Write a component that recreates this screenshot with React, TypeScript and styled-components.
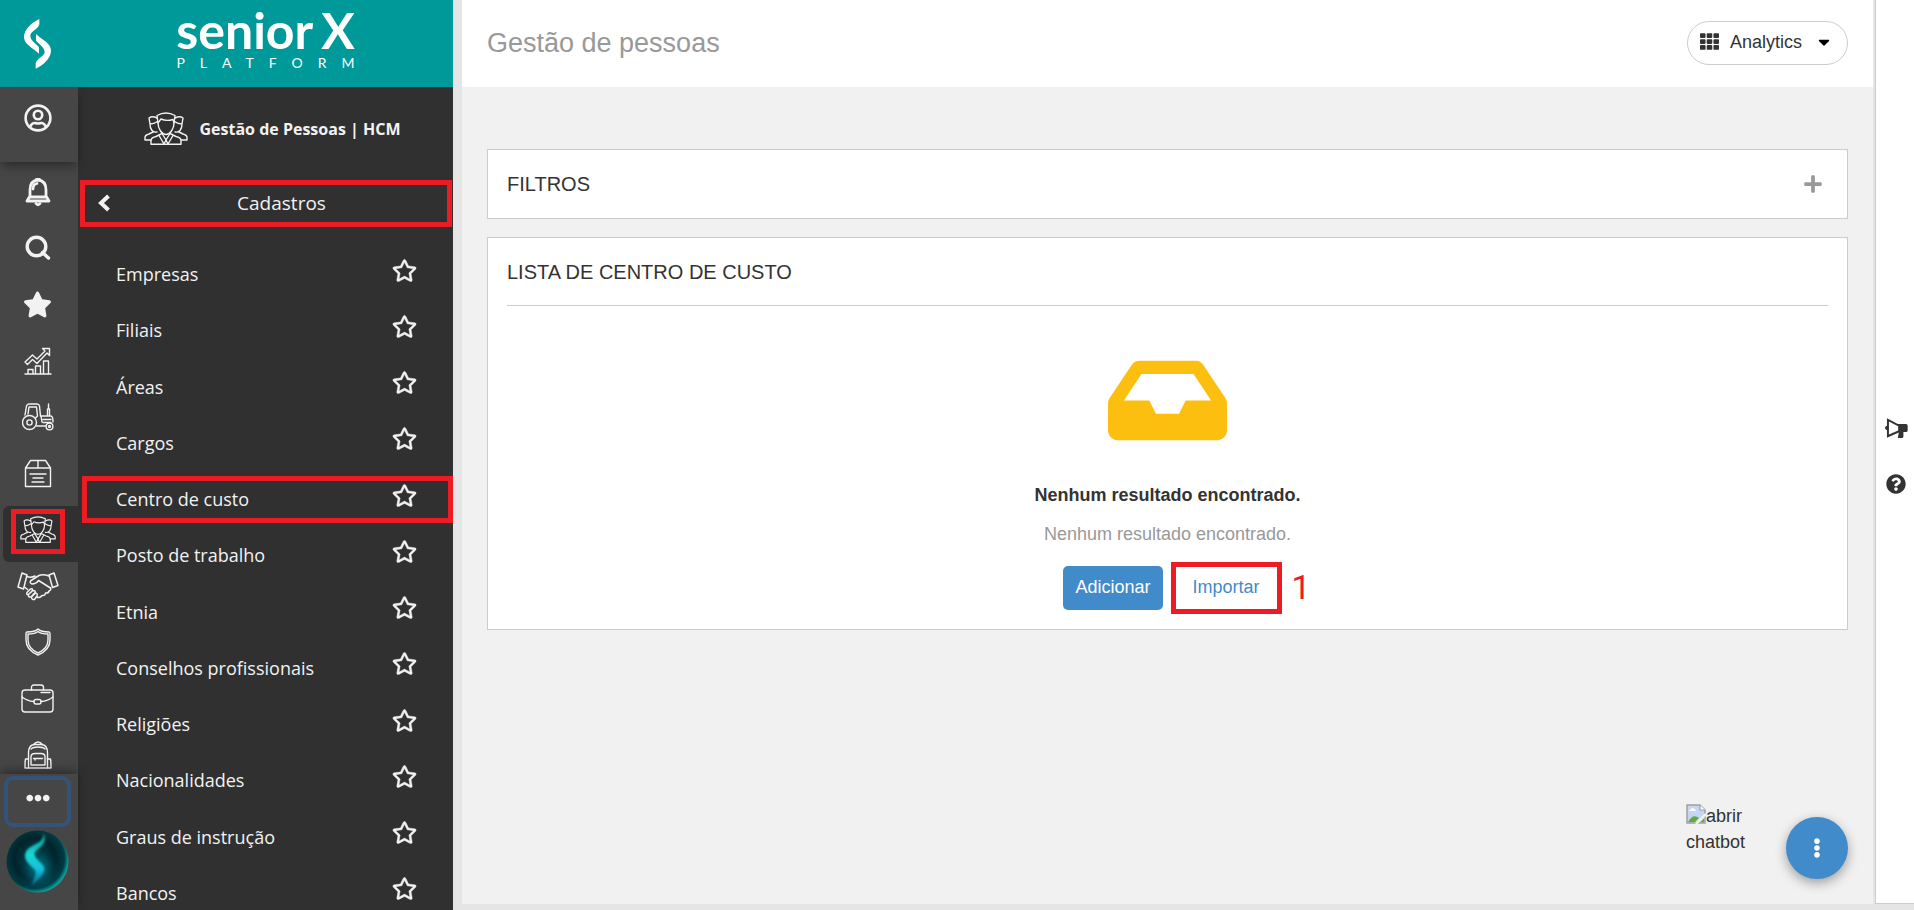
import React from "react";
import styled, { createGlobalStyle, css } from "styled-components";
import {
  FaCaretDown,
  FaEllipsisH,
  FaEllipsisV,
  FaInbox,
  FaPlus,
  FaQuestionCircle,
  FaRegStar,
  FaStar,
  FaTh,
} from "react-icons/fa";

const color = {
  teal: "#009999",
  rail: "#464646",
  panel: "#303030",
  light: "#f2f2f2",
  page: "#f1f1f1",
  gutter: "#e5e5e5",
  line: "#cccccc",
  text: "#333333",
  muted: "#999999",
  blue: "#428bca",
  amber: "#fcbf10",
  red: "#ed1c24",
};

const sans = `"Liberation Sans", Arial, sans-serif`;
const openSans = `"Open Sans", "Noto Sans", sans-serif`;

const GlobalStyle = createGlobalStyle`
  *, *::before, *::after { box-sizing: border-box; }
  body {
    margin: 0;
    background: ${color.gutter};
    color: ${color.text};
    font: 18px/26px ${sans};
  }
  button { margin: 0; padding: 0; border: 0; background: none; color: inherit; font: inherit; cursor: pointer; }
  ul { margin: 0; padding: 0; list-style: none; }
  h1, h2, p { margin: 0; font-weight: 400; }
  a { color: inherit; text-decoration: none; }
  svg { display: block; flex: none; }
`;

const Shell = styled.div`
  display: flex;
  height: 100vh;
  overflow: hidden;
`;

const Navigation = styled.div`
  display: flex;
  flex-direction: column;
  flex: none;
  width: 453px;
  color: ${color.light};
`;

const Brand = styled.header`
  display: flex;
  flex: none;
  height: 87px;
  background: ${color.teal};
  color: #fff;
`;

const BrandMark = styled.a`
  display: flex;
  align-items: center;
  justify-content: center;
  width: 78px;
  padding-right: 3px;
`;

const BrandName = styled.div`
  display: flex;
  flex-direction: column;
  align-items: center;
  flex: 1;
  padding-top: 5px;
  font-family: Lato, sans-serif;
`;

const Wordmark = styled.div`
  display: flex;
  gap: 8px;
  font-size: 50px;
  line-height: 50px;
  font-weight: 700;
`;

const Tagline = styled.div`
  padding-left: 15px;
  font-size: 14px;
  line-height: 16px;
  letter-spacing: 15px;
`;

const NavBody = styled.div`
  display: flex;
  flex: 1;
  min-height: 0;
`;

const Rail = styled.nav`
  display: flex;
  flex-direction: column;
  flex: none;
  width: 78px;
  background: ${color.rail};
`;

const RailTop = styled.div`
  position: relative;
  display: flex;
  align-items: flex-start;
  justify-content: center;
  flex: none;
  height: 75px;
  padding: 17px 3px 0 0;
  background: ${color.rail};
  box-shadow: 0 5px 10px -2px rgba(0, 0, 0, 0.45);
`;

const RailScroll = styled.div`
  flex: 1;
  min-height: 0;
  overflow: hidden;
`;

const RailList = styled.ul`
  display: grid;
  grid-auto-rows: 1fr;
  height: 619px;
  margin-top: 6px;
`;

const RailItem = styled.li<{ $active?: boolean }>`
  position: relative;
  display: flex;
  margin-left: 3px;
  ${(p) =>
    p.$active &&
    css`
      background: ${color.panel};
      border-radius: 6px 0 0 6px;
    `}
`;

const RailButton = styled.button`
  display: flex;
  align-items: center;
  justify-content: center;
  flex: 1;
  padding: 0 6px 8px 0;
`;

const RailFooter = styled.div`
  position: relative;
  display: flex;
  flex-direction: column;
  gap: 3px;
  flex: none;
  height: 136px;
  padding: 2px 7px 0 4px;
  background: ${color.rail};
  box-shadow: 0 -4px 10px -1px rgba(0, 0, 0, 0.4);
`;

const MoreButton = styled.button`
  display: flex;
  justify-content: center;
  height: 51px;
  padding-top: 6px;
  border: 4px solid #33537a;
  border-radius: 9px;
`;

const OrbButton = styled.button`
  align-self: center;
  border-radius: 50%;
`;

const MenuPanel = styled.aside`
  flex: 1;
  min-width: 0;
  overflow: hidden;
  background: ${color.panel};
  font-family: ${openSans};
`;

const ModuleTitle = styled.div`
  display: flex;
  align-items: center;
  justify-content: center;
  gap: 12px;
  height: 93px;
  padding: 0 0 10px 13px;
  font-size: 16px;
  font-weight: 700;
`;

const BackButton = styled.button`
  position: relative;
  display: flex;
  align-items: center;
  width: 100%;
  height: 47px;
  padding: 0 0 2px 20px;
  font-size: 19px;
`;

const BackLabel = styled.span`
  flex: 1;
  text-align: center;
`;

const MenuList = styled.ul`
  display: grid;
  grid-auto-rows: 1fr;
  height: 675px;
  margin-top: 19px;
`;

const MenuRow = styled.li`
  position: relative;
  display: flex;
  align-items: center;
  justify-content: space-between;
  padding: 0 36px 0 38px;
`;

const StarButton = styled.button`
  padding-bottom: 8px;
`;

const Highlight = styled.span<{ $inset: string }>`
  position: absolute;
  inset: ${(p) => p.$inset};
  border: 5px solid ${color.red};
  pointer-events: none;
`;

const Content = styled.div`
  position: relative;
  display: flex;
  flex-direction: column;
  flex: 1;
  min-width: 0;
  margin: 0 2px 6px 9px;
  background: ${color.page};
`;

const TopBar = styled.header`
  display: flex;
  align-items: center;
  justify-content: space-between;
  height: 87px;
  padding: 0 25px 2px;
  background: #fff;
`;

const PageTitle = styled.h1`
  color: ${color.muted};
  font-size: 27px;
  line-height: 30px;
`;

const ProductPicker = styled.button`
  display: flex;
  align-items: center;
  width: 161px;
  height: 44px;
  padding: 0 14px 2px 12px;
  border: 1px solid ${color.line};
  border-radius: 22px;
`;

const PickerLabel = styled.span`
  flex: 1;
  padding-left: 11px;
  text-align: left;
`;

const Cards = styled.main`
  display: flex;
  flex-direction: column;
  gap: 18px;
  padding: 62px 25px 0;
`;

const Card = styled.section`
  padding: 0 19px;
  border: 1px solid ${color.line};
  background: #fff;
`;

const CardHeader = styled.div<{ $ruled?: boolean }>`
  display: flex;
  align-items: center;
  justify-content: space-between;
  height: 68px;
  padding-right: 5px;
  ${(p) => p.$ruled && `border-bottom: 1px solid ${color.line};`}
`;

const CardTitle = styled.h2`
  font-size: 20px;
  line-height: 26px;
`;

const EmptyState = styled.div`
  display: flex;
  flex-direction: column;
  align-items: center;
  padding: 35px 0 19px;
`;

const EmptyTitle = styled.p`
  padding-top: 22px;
  font-weight: 700;
`;

const EmptyText = styled.p`
  padding: 13px 0 19px;
  color: ${color.muted};
`;

const Actions = styled.div`
  position: relative;
  display: flex;
  gap: 18px;
`;

const ActionButton = styled.button<{ $primary?: boolean }>`
  position: relative;
  height: 44px;
  padding: 0 12px 3px;
  border-radius: 5px;
  color: ${(p) => (p.$primary ? "#fff" : color.blue)};
  background: ${(p) => (p.$primary ? color.blue : "transparent")};
`;

const StepNumber = styled.span`
  position: absolute;
  left: 100%;
  margin-left: 20px;
  color: ${color.red};
  font: 34px/42px Roboto, sans-serif;
`;

const FloatingArea = styled.div`
  position: absolute;
  right: 25px;
  bottom: 25px;
  display: flex;
  align-items: flex-end;
  gap: 27px;
`;

const Chatbot = styled.a`
  width: 73px;
  padding-bottom: 24px;
`;

const BrokenImage = styled.svg`
  display: inline-block;
  vertical-align: -2px;
`;

const Fab = styled.button`
  display: flex;
  align-items: center;
  justify-content: center;
  width: 62px;
  height: 62px;
  border-radius: 50%;
  background: ${color.blue};
  color: #fff;
  box-shadow: 0 4px 12px rgba(0, 0, 0, 0.35);
`;

const HelpRail = styled.aside`
  display: flex;
  flex-direction: column;
  align-items: center;
  justify-content: center;
  gap: 35px;
  flex: none;
  width: 39px;
  margin-bottom: 6px;
  padding: 9px 0 0 2px;
  border-left: 1px solid ${color.line};
  border-bottom: 1px solid ${color.line};
  background: #fff;
`;

type LineIconProps = { w: number; h: number; box: string; stroke?: number; children: React.ReactNode };

const LineIcon = ({ w, h, box, stroke = 1.4, children }: LineIconProps) => (
  <svg
    width={w}
    height={h}
    viewBox={box}
    fill="none"
    stroke="currentColor"
    strokeWidth={stroke}
    strokeLinecap="round"
    strokeLinejoin="round"
    aria-hidden="true"
  >
    {children}
  </svg>
);

const LogoMark = () => {
  const ribbon =
    "M118 58 C95 68 72 90 72 112 C72 135 100 145 117 162 L117 142 C106 130 91 122 91 108 C91 95 114 90 118 74Z";
  return (
    <svg width="27" height="50" viewBox="72 58 81 150" fill="currentColor" aria-hidden="true">
      <path d={ribbon} />
      <path d={ribbon} transform="rotate(180 112.5 132.5)" />
    </svg>
  );
};

const ChevronIcon = () => (
  <svg width="12" height="18" viewBox="0 0 12 18" fill="none" stroke="currentColor" strokeWidth="4" aria-hidden="true">
    <path d="M10.500 2 L3 9 L10.500 16" />
  </svg>
);

const PeopleIcon = ({ w, h }: { w: number; h: number }) => (
  <LineIcon w={w} h={h} box="0 0 44 33">
    <path d="M14 11 L13 3.500 Q22 -1.500 31 3.500 L30 11" />
    <path d="M14 11 C14 17 18 22.500 22 22.500 S30 17 30 11 L29 7.500 Q22 9.500 17 7 Z" />
    <path d="M13 6 Q8 3.500 5 6 L6 12 C6 17 8.500 21 13 20 M6 12 Q10 12 13.500 9.500" />
    <path d="M31 6 Q36 3.500 39 6 L38 12 C38 17 35.500 21 31 20 M38 12 Q34 12 30.500 9.500" />
    <path d="M7 28 H1 V25.500 Q1 23 5 22 L9 20 M37 28 H43 V25.500 Q43 23 39 22 L35 20" />
    <path d="M7 32.300 V28 Q7.500 25.500 12 24.500 L18 21.500 L22 28 L26 21.500 L32 24.500 Q36.500 25.500 37 28 V32.300 Z" />
    <path d="M15 23.500 L20 32 L22 28 L24 32 L29 23.500" />
  </LineIcon>
);

const ProfileIcon = () => (
  <LineIcon w={28} h={28} box="0 0 28 28" stroke={2.6}>
    <circle cx="14" cy="14" r="12.4" />
    <circle cx="14" cy="11" r="4.200" />
    <path d="M6.500 22 Q8.500 18.500 11 19 Q14 20 17 19 Q19.500 18.500 21.500 22" />
  </LineIcon>
);

const BellIcon = () => (
  <LineIcon w={26} h={30} box="0 0 26 30" stroke={2.8}>
    <path d="M13 3 C7 3.500 5 8 5 13 V19 L2 24 H24 L21 19 V13 C21 8 19 3.500 13 3Z" />
    <path d="M5 20 H21 M8 12 C8 8.500 9.500 7 12 6.500" />
    <path d="M11 26.500 Q13 29 15 26.500 M11.500 2.500 H14.500" />
  </LineIcon>
);

const SearchIcon = () => (
  <LineIcon w={26} h={26} box="0 0 26 26" stroke={3.4}>
    <circle cx="11.500" cy="11.500" r="9.300" />
    <path d="M17.500 17.500 L23.500 23" />
  </LineIcon>
);

const ChartIcon = () => (
  <LineIcon w={28} h={28} box="0 0 28 28">
    <path d="M1 27 H27 M4 27 V22.500 H9 V27 M11.500 27 V19 H16.500 V27 M19.500 27 V14 H24.500 V27" />
    <path d="M1 15 L8.500 8 L13 12 L21 4 L18.500 1.500 H25.500 V8.500 L23 6 L13 16.500 L8.500 12.500 L3.500 17.500 Z" />
  </LineIcon>
);

const TractorIcon = () => (
  <LineIcon w={32} h={28} box="0 0 32 28">
    <circle cx="7.500" cy="19.500" r="7" />
    <circle cx="7.500" cy="19.500" r="2.600" />
    <circle cx="27.500" cy="23.500" r="3.400" />
    <circle cx="27.500" cy="23.500" r="1" />
    <path d="M3 12 L4.500 3 Q5 1 7 1 H15 Q17 1 17.500 3 L18.500 13 M6 11 L7 4 H14.500 L15.500 13 L13.500 15" />
    <path d="M18.500 13 H29 Q31 13.500 31 19 M14.500 23 H23.500 M19 13 L20 19 M21 16.500 H29 M21 19.500 H29" />
    <path d="M25.500 12.500 V6 H27.500 V12.500 M26.500 1 V5" />
  </LineIcon>
);

const BoxIcon = () => (
  <LineIcon w={28} h={29} box="0 0 28 29">
    <path d="M1.500 9 L6.500 1.500 H21.500 L26.500 9 V27.500 H1.500 Z M1.500 9 H26.500 M14 1.500 V9" />
    <path d="M6 15 H22 M9 19 H19 M8 23 H20" />
  </LineIcon>
);

const HandshakeIcon = () => (
  <LineIcon w={42} h={29} box="0 0 42 29" stroke={1.5}>
    <path d="M5 1 L10 3 L6.500 17 L1 15 Z M37 1 L32 3 L35.500 15.500 L41 13.500 Z" />
    <path d="M10 4.500 Q14 6 18 4 M32 4 Q26 2 22 3.500 L14 8.500 Q12 11 15 12 Q19 12 21.500 8.500 L33.500 16" />
    <path d="M7.500 15 L10.500 17.500 M33.500 16 Q34.500 18 32 19 Q31.500 21.500 28.500 21 Q28 24 25 23.500 Q23 26.500 19.500 25" />
    <path d="M10 20.500 L13.500 17 Q16 16 15.500 18.500 L11.500 22.500 Q9 23 10 20.500 M11.500 22.500 L16 18.500 Q19 18.500 18 20.500 L14 25 Q11 25.500 11.500 22.500 M14.500 25 L18.500 21 Q21 21.500 20 24 L17.500 27.500 Q14.500 28 14.500 25" />
  </LineIcon>
);

const ShieldIcon = () => (
  <LineIcon w={26} h={28} box="0 0 26 28">
    <path d="M13 1 Q10 4 2 4 Q1 4 1 6 V12 Q1 22 13 27 Q25 22 25 12 V6 Q25 4 24 4 Q16 4 13 1Z" />
    <path d="M13 3.500 Q10 6 3 6 V12 Q3 20.500 13 25 Q23 20.500 23 12 V6 Q16 6 13 3.500Z" />
  </LineIcon>
);

const BriefcaseIcon = () => (
  <LineIcon w={33} h={29} box="0 0 33 29">
    <rect x="1" y="6" width="31" height="22" rx="3" />
    <path d="M10.500 6 V3.500 Q10.500 1 13 1 H20 Q22.500 1 22.500 3.500 V6 M1 13 Q6 17 13 17.500 M32 13 Q27 17 20 17.500 M20 8.500 H29" />
    <rect x="13" y="15.500" width="7" height="4.500" rx="2" />
  </LineIcon>
);

const BackpackIcon = () => (
  <LineIcon w={28} h={28} box="0 0 28 28">
    <path d="M4.500 27 V12 Q4.500 3.500 11 3.500 H17 Q23.500 3.500 23.500 12 V27 Z M9.500 3.500 Q14 -1.500 18.500 3.500" />
    <path d="M7 8 Q9 6 14 6 T21 8 M4.500 18 H1.500 Q1 20 1 27 H4.500 M23.500 18 H26.500 Q27 20 27 27 H23.500" />
    <path d="M7 24 V16 Q7 12.500 11 12.500 H17 Q21 12.500 21 16 V24 Z M9.500 17.500 H18.500 M11 17.500 V19" />
  </LineIcon>
);

const OrbIcon = () => (
  <svg width="63" height="63" viewBox="0 0 63 63" aria-hidden="true">
    <defs>
      <radialGradient id="orb" cx="45%" cy="45%" r="55%">
        <stop offset="0" stopColor="#01454f" />
        <stop offset="0.6" stopColor="#01242c" />
        <stop offset="0.88" stopColor="#013b43" />
        <stop offset="1" stopColor="#0a9c9a" />
      </radialGradient>
      <linearGradient id="flame" x1="0" y1="0" x2="0" y2="1">
        <stop offset="0" stopColor="#0b8e92" />
        <stop offset="0.4" stopColor="#14d8d0" />
        <stop offset="0.7" stopColor="#12b9dd" />
        <stop offset="1" stopColor="#08526e" />
      </linearGradient>
      <filter id="soft" x="-50%" y="-50%" width="200%" height="200%">
        <feGaussianBlur stdDeviation="1" />
      </filter>
      <filter id="haze" x="-50%" y="-50%" width="200%" height="200%">
        <feGaussianBlur stdDeviation="5" />
      </filter>
    </defs>
    <circle cx="31.500" cy="31.500" r="31" fill="url(#orb)" />
    <ellipse cx="33" cy="40" rx="12" ry="14" fill="#0591a5" opacity="0.5" filter="url(#haze)" />
    <path
      d="M37 3 C43 12 34 17 30 21 C26 25 31 29 36 34 C43 41 33 49 25 57 C28 47 32 43 28 39 C21 33 16 27 21 20 C26 14 39 13 37 3Z"
      fill="url(#flame)"
      filter="url(#soft)"
    />
  </svg>
);

const MegaphoneIcon = () => (
  <svg width="23" height="21" viewBox="135 88 70 62" fill="currentColor" aria-hidden="true">
    <path
      fillRule="evenodd"
      d="M141 88 L174 105 H199 Q204 105 204 111 V124 Q204 130 199 130 H191 V143 Q191 148 186 148 H174 L177 131 L141 147 V124 Q135 122 135 117 T141 111Z M147 98 V137 L175 125 V112Z"
    />
  </svg>
);

const railItems: { label: string; icon: React.ReactNode; active?: boolean }[] = [
  { label: "Notificações", icon: <BellIcon /> },
  { label: "Pesquisar", icon: <SearchIcon /> },
  { label: "Favoritos", icon: <FaStar size={29} /> },
  { label: "Indicadores", icon: <ChartIcon /> },
  { label: "Agronegócio", icon: <TractorIcon /> },
  { label: "Logística", icon: <BoxIcon /> },
  { label: "Gestão de Pessoas", icon: <PeopleIcon w={36} h={27} />, active: true },
  { label: "Relacionamento", icon: <HandshakeIcon /> },
  { label: "Segurança", icon: <ShieldIcon /> },
  { label: "Empresarial", icon: <BriefcaseIcon /> },
  { label: "Educação", icon: <BackpackIcon /> },
];

const menuItems = [
  "Empresas",
  "Filiais",
  "Áreas",
  "Cargos",
  "Centro de custo",
  "Posto de trabalho",
  "Etnia",
  "Conselhos profissionais",
  "Religiões",
  "Nacionalidades",
  "Graus de instrução",
  "Bancos",
];

export default function App() {
  return (
    <>
      <GlobalStyle />
      <Shell>
        <Navigation>
          <Brand>
            <BrandMark href="#" aria-label="Início">
              <LogoMark />
            </BrandMark>
            <BrandName>
              <Wordmark>
                <span>senior</span>
                <span>X</span>
              </Wordmark>
              <Tagline>PLATFORM</Tagline>
            </BrandName>
          </Brand>
          <NavBody>
            <Rail>
              <RailTop>
                <button aria-label="Perfil">
                  <ProfileIcon />
                </button>
              </RailTop>
              <RailScroll>
                <RailList>
                  {railItems.map((item) => (
                    <RailItem key={item.label} $active={item.active}>
                      <RailButton aria-label={item.label}>{item.icon}</RailButton>
                      {item.active && <Highlight $inset="3px 13px 8px 8px" />}
                    </RailItem>
                  ))}
                </RailList>
              </RailScroll>
              <RailFooter>
                <MoreButton aria-label="Mais opções">
                  <FaEllipsisH size={24} />
                </MoreButton>
                <OrbButton aria-label="Assistente">
                  <OrbIcon />
                </OrbButton>
              </RailFooter>
            </Rail>
            <MenuPanel>
              <ModuleTitle>
                <PeopleIcon w={44} h={33} />
                <span>Gestão de Pessoas | HCM</span>
              </ModuleTitle>
              <BackButton>
                <ChevronIcon />
                <BackLabel>Cadastros</BackLabel>
                <Highlight $inset="0 1px 0 2px" />
              </BackButton>
              <MenuList>
                {menuItems.map((label) => (
                  <MenuRow key={label}>
                    <a href="#">{label}</a>
                    <StarButton aria-label={`Favoritar ${label}`}>
                      <FaRegStar size={25} stroke="currentColor" strokeWidth={10} />
                    </StarButton>
                    {label === "Centro de custo" && <Highlight $inset="5px 0 4px 4px" />}
                  </MenuRow>
                ))}
              </MenuList>
            </MenuPanel>
          </NavBody>
        </Navigation>

        <Content>
          <TopBar>
            <PageTitle>Gestão de pessoas</PageTitle>
            <ProductPicker>
              <FaTh size={19} />
              <PickerLabel>Analytics</PickerLabel>
              <FaCaretDown size={18} color="#000" />
            </ProductPicker>
          </TopBar>
          <Cards>
            <Card>
              <CardHeader>
                <CardTitle>FILTROS</CardTitle>
                <button aria-label="Expandir filtros">
                  <FaPlus size={20} color={color.muted} />
                </button>
              </CardHeader>
            </Card>
            <Card>
              <CardHeader $ruled>
                <CardTitle>LISTA DE CENTRO DE CUSTO</CardTitle>
              </CardHeader>
              <EmptyState>
                <FaInbox size={119} color={color.amber} />
                <EmptyTitle>Nenhum resultado encontrado.</EmptyTitle>
                <EmptyText>Nenhum resultado encontrado.</EmptyText>
                <Actions>
                  <ActionButton $primary>Adicionar</ActionButton>
                  <ActionButton>
                    Importar
                    <Highlight $inset="-4px -10px" />
                  </ActionButton>
                  <StepNumber>1</StepNumber>
                </Actions>
              </EmptyState>
            </Card>
          </Cards>
          <FloatingArea>
            <Chatbot href="#">
              <BrokenImage width="20" height="20" viewBox="0 0 20 20" aria-hidden="true">
                <path d="M1 1 H14 L19 6 V19 H1 Z" fill="#c5d5f5" stroke="#a0a0a0" strokeWidth="1.500" />
                <path d="M14 1 V6 H19" fill="#fff" stroke="#a0a0a0" strokeWidth="1.200" />
                <path d="M3 7 Q3 5 5 5.500 Q6 2.500 8 5 Q10 5 10 7 Z" fill="#fff" />
                <path d="M2 18 Q7 9 13 14 L9 18 Z M14 18.300 L18 14.500 V18.300 Z" fill="#5cae3c" />
                <path d="M10 20 L20 10" stroke="#f1f1f1" strokeWidth="2.500" />
              </BrokenImage>
              abrir chatbot
            </Chatbot>
            <Fab aria-label="Ações">
              <FaEllipsisV size={20} />
            </Fab>
          </FloatingArea>
        </Content>

        <HelpRail>
          <button aria-label="Novidades">
            <MegaphoneIcon />
          </button>
          <button aria-label="Ajuda">
            <FaQuestionCircle size={20} />
          </button>
        </HelpRail>
      </Shell>
    </>
  );
}
